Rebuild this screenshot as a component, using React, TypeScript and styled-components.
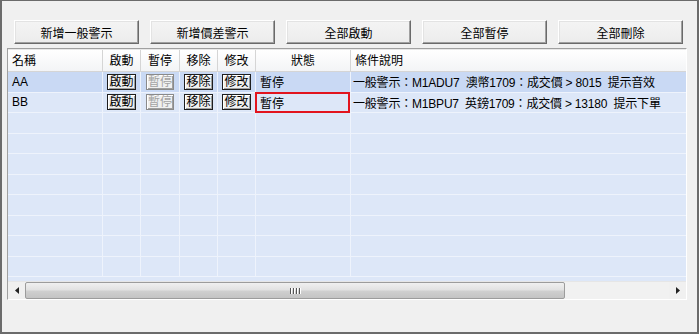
import styled, { createGlobalStyle, css } from "styled-components";

const GlobalStyle = createGlobalStyle`
  html, body {
    margin: 0;
    padding: 0;
    background: #f0f0f0;
  }
  body {
    font-family: "Liberation Sans", "Noto Sans CJK TC", sans-serif;
    font-size: 12px;
    color: #000;
  }
`;

const COLS = "95px 38px 39px 38px 38px 95px 1fr";

const toolButtons = ["新增一般警示", "新增價差警示", "全部啟動", "全部暫停", "全部刪除"];

type Alert = { name: string; status: string; desc: string; selected?: boolean; marked?: boolean };

const alerts: Alert[] = [
  { name: "AA", status: "暫停", desc: "一般警示：M1ADU7  澳幣1709：成交價 > 8015  提示音效", selected: true },
  { name: "BB", status: "暫停", desc: "一般警示：M1BPU7  英鎊1709：成交價 > 13180  提示下單", marked: true },
];

const EMPTY_ROWS = 8;

function App() {
  return (
    <>
      <GlobalStyle />
      <Window>
        <Toolbar>
          {toolButtons.map((t) => (
            <ToolButton key={t}>{t}</ToolButton>
          ))}
        </Toolbar>
        <ListFrame>
          <Header>
            <HeadCell $left>名稱</HeadCell>
            <HeadCell>啟動</HeadCell>
            <HeadCell>暫停</HeadCell>
            <HeadCell>移除</HeadCell>
            <HeadCell>修改</HeadCell>
            <HeadCell>狀態</HeadCell>
            <HeadCell $left>條件說明</HeadCell>
          </Header>
          <Body>
            {alerts.map((a) => (
              <Row key={a.name} $selected={a.selected}>
                <Cell>{a.name}</Cell>
                <Cell $center><MiniButton>啟動</MiniButton></Cell>
                <Cell $center><MiniButton disabled>暫停</MiniButton></Cell>
                <Cell $center><MiniButton>移除</MiniButton></Cell>
                <Cell $center><MiniButton>修改</MiniButton></Cell>
                <StatusCell $marked={a.marked}>{a.status}</StatusCell>
                <DescCell>{a.desc}</DescCell>
              </Row>
            ))}
            {Array.from({ length: EMPTY_ROWS }).map((_, i) => (
              <Row key={i}>
                {Array.from({ length: 7 }).map((__, j) => (
                  <Cell key={j} />
                ))}
              </Row>
            ))}
          </Body>
          <HScroll>
            <ArrowButton>
              <svg width="4" height="7" viewBox="0 0 4 7"><path d="M4 0 L0 3.5 L4 7 Z" fill="#222" /></svg>
            </ArrowButton>
            <Track>
              <Thumb>
                <Grip>
                  <i /><i /><i /><i />
                </Grip>
              </Thumb>
            </Track>
            <ArrowButton>
              <svg width="4" height="7" viewBox="0 0 4 7"><path d="M0 0 L4 3.5 L0 7 Z" fill="#222" /></svg>
            </ArrowButton>
          </HScroll>
        </ListFrame>
      </Window>
    </>
  );
}

const Window = styled.div`
  width: 699px;
  height: 334px;
  box-sizing: border-box;
  border: 2px solid #6b6b6b;
  border-top-width: 1px;
  background: #f0f0f0;
  padding: 19px 0 0 5px;
`;

const Toolbar = styled.div`
  display: flex;
  gap: 11px;
  padding-left: 7px;
`;

const ToolButton = styled.button`
  width: 125px;
  height: 24px;
  margin: 0;
  padding: 0;
  font: inherit;
  color: #000;
  background: linear-gradient(#f4f4f4, #ececec);
  border: 1px solid;
  border-color: #ffffff #6a6a6a #6a6a6a #ffffff;
  box-shadow: inset -1px -1px 0 #a0a0a0, inset 1px 1px 0 #e3e3e3;
`;

const ListFrame = styled.div`
  margin-top: 4px;
  width: 680px;
  height: 252px;
  box-sizing: border-box;
  border: 1px solid;
  border-color: #a0a0a0 #ffffff #ffffff #a0a0a0;
  background: #dde7f8;
  display: flex;
  flex-direction: column;
`;

const Header = styled.div`
  display: grid;
  grid-template-columns: ${COLS};
  height: 21px;
  background: linear-gradient(#ffffff, #f3f4f6);
  border-bottom: 1px solid #d5d5d5;
  border-top: 1px solid #e8e8e8;
`;

const HeadCell = styled.div<{ $left?: boolean }>`
  display: flex;
  align-items: center;
  justify-content: ${(p) => (p.$left ? "flex-start" : "center")};
  padding-left: ${(p) => (p.$left ? "4px" : "0")};
  padding-bottom: 3px;
  border-right: 1px solid #d5d5d5;
  white-space: nowrap;
  &:last-child {
    border-right: none;
  }
`;

const Body = styled.div`
  flex: 1;
  overflow: hidden;
`;

const Row = styled.div<{ $selected?: boolean }>`
  display: grid;
  grid-template-columns: ${COLS};
  height: 20.5px;
  box-sizing: border-box;
  border-bottom: 1px solid #eef3fc;
  background: ${(p) => (p.$selected ? "#c9d9f4" : "#dde7f8")};
`;

const Cell = styled.div<{ $center?: boolean }>`
  display: flex;
  align-items: center;
  justify-content: ${(p) => (p.$center ? "center" : "flex-start")};
  padding-left: ${(p) => (p.$center ? "0" : "4px")};
  border-right: 1px solid #eef3fc;
  white-space: pre;
  overflow: hidden;
  &:last-child {
    border-right: none;
  }
`;

const DescCell = styled(Cell)`
  padding-left: 2px;
  letter-spacing: -0.2px;
`;

const StatusCell = styled(Cell)<{ $marked?: boolean }>`
  position: relative;
  overflow: visible;
  ${(p) =>
    p.$marked &&
    css`
      z-index: 1;
      &::after {
        content: "";
        position: absolute;
        inset: -1px 0 -1px -1px;
        border: 2px solid #e2141e;
      }
    `}
`;

const MiniButton = styled.button`
  height: 16px;
  margin: 0;
  padding: 0 1px;
  font: inherit;
  line-height: 14px;
  color: #000;
  background: #f0f0f0;
  border: 1px solid #1e1e1e;
  box-shadow: inset 1px 1px 0 #ffffff, inset -1px -1px 0 #a0a0a0;
  &:disabled {
    color: #a3a3a3;
    border-color: #8a8a8a;
  }
`;

const HScroll = styled.div`
  display: flex;
  height: 17px;
  background: #f0f0f0;
  border-top: 1px solid #e6e6e6;
`;

const ArrowButton = styled.div`
  width: 17px;
  display: flex;
  align-items: center;
  justify-content: center;
  background: #f0f0f0;
`;

const Track = styled.div`
  flex: 1;
  display: flex;
  background: #f1f1f1;
`;

const Thumb = styled.div`
  width: 540px;
  box-sizing: border-box;
  border: 1px solid #9c9c9c;
  border-radius: 2px;
  background: linear-gradient(#f0f0f0, #e2e2e2 45%, #cfcfcf 55%, #c4c4c4);
  display: flex;
  align-items: center;
  justify-content: center;
`;

const Grip = styled.div`
  display: flex;
  gap: 1px;
  i {
    width: 1px;
    height: 6px;
    background: #555;
    border-right: 1px solid #fff;
  }
`;

export default App;
